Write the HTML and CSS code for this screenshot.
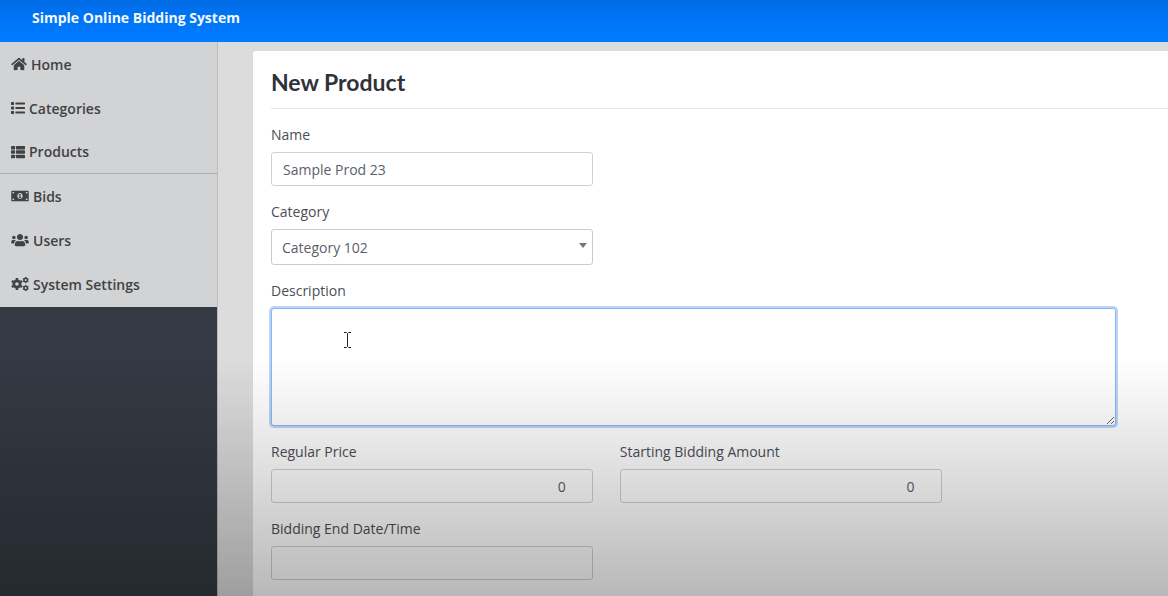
FILE: index.html
```html
<!DOCTYPE html>
<html lang="en">
<head>
<meta charset="utf-8">
<meta name="viewport" content="width=device-width, initial-scale=1">
<title>Simple Online Bidding System</title>
<link rel="stylesheet" href="styles.css">
</head>
<body>
<header class="topbar"><a class="brand" href="#">Simple Online Bidding System</a></header>
<div class="layout">
  <nav class="sidebar">
    <div class="menu">
      <a class="item" href="#"><svg class="icon" width="16" height="14" viewBox="0 0 576 512"><path d="M280.37 148.26L96 300.11V464a16 16 0 0 0 16 16l112.06-.29a16 16 0 0 0 15.92-16V368a16 16 0 0 1 16-16h64a16 16 0 0 1 16 16v95.64a16 16 0 0 0 16 16.05L464 480a16 16 0 0 0 16-16V300L295.67 148.26a12.19 12.19 0 0 0-15.3 0zM571.6 251.47L488 182.56V44.05a12 12 0 0 0-12-12h-56a12 12 0 0 0-12 12v72.61L318.47 43a48 48 0 0 0-61 0L4.34 251.47a12 12 0 0 0-1.6 16.9l25.5 31A12 12 0 0 0 45.15 301l235.22-193.74a12.19 12.19 0 0 1 15.3 0L530.9 301a12 12 0 0 0 16.9-1.6l25.5-31a12 12 0 0 0-1.7-16.93z"/></svg>Home</a>
      <a class="item" href="#"><svg class="icon" width="14" height="14" viewBox="0 0 512 512"><path d="M16 40h80a16 16 0 0 1 16 16v72a16 16 0 0 1-16 16H16a16 16 0 0 1-16-16V56a16 16 0 0 1 16-16zM16 204h80a16 16 0 0 1 16 16v72a16 16 0 0 1-16 16H16a16 16 0 0 1-16-16v-72a16 16 0 0 1 16-16zM16 368h80a16 16 0 0 1 16 16v72a16 16 0 0 1-16 16H16a16 16 0 0 1-16-16v-72a16 16 0 0 1 16-16zM176 58h320a16 16 0 0 1 16 16v40a16 16 0 0 1-16 16H176a16 16 0 0 1-16-16V74a16 16 0 0 1 16-16zM176 220h320a16 16 0 0 1 16 16v40a16 16 0 0 1-16 16H176a16 16 0 0 1-16-16v-40a16 16 0 0 1 16-16zM176 384h320a16 16 0 0 1 16 16v40a16 16 0 0 1-16 16H176a16 16 0 0 1-16-16v-40a16 16 0 0 1 16-16z"/></svg>Categories</a>
      <a class="item item--ruled" href="#"><svg class="icon" width="14" height="14" viewBox="0 0 512 512"><rect x="0" y="32" width="149" height="128" rx="24"/><rect x="0" y="192" width="149" height="128" rx="24"/><rect x="0" y="352" width="149" height="128" rx="24"/><rect x="181" y="32" width="331" height="128" rx="24"/><rect x="181" y="192" width="331" height="128" rx="24"/><rect x="181" y="352" width="331" height="128" rx="24"/></svg>Products</a>
      <a class="item" href="#"><svg class="icon" width="18" height="14" viewBox="0 0 640 512"><path fill-rule="evenodd" d="M32 64h576a32 32 0 0 1 32 32v320a32 32 0 0 1-32 32H32a32 32 0 0 1-32-32V96a32 32 0 0 1 32-32zM48 112v64a64 64 0 0 0 64-64zM48 400h64a64 64 0 0 0-64-64zM320 144c-53 0-96 50-96 112s43 112 96 112 96-50 96-112-43-112-96-112zM592 112h-64a64 64 0 0 0 64 64zM592 336a64 64 0 0 0-64 64h64zM300 184h40v120h24v32h-88v-32h24v-76h-24v-28z"/></svg>Bids</a>
      <a class="item" href="#"><svg class="icon" width="18" height="14" viewBox="0 0 640 512"><path d="M96 224c35.3 0 64-28.7 64-64s-28.7-64-64-64-64 28.7-64 64 28.7 64 64 64zm448 0c35.3 0 64-28.7 64-64s-28.7-64-64-64-64 28.7-64 64 28.7 64 64 64zm32 32h-64c-17.6 0-33.5 7.1-45.1 18.6 40.3 22.1 68.9 62 75.1 109.4h66c17.7 0 32-14.3 32-32v-32c0-35.3-28.7-64-64-64zm-256 0c61.9 0 112-50.1 112-112S381.9 32 320 32 208 82.1 208 144s50.1 112 112 112zm76.8 32h-8.3c-20.8 10-43.9 16-68.5 16s-47.6-6-68.5-16h-8.3C179.6 288 128 339.6 128 403.2V432c0 26.5 21.5 48 48 48h288c26.5 0 48-21.5 48-48v-28.8c0-63.6-51.6-115.2-115.2-115.2zm-223.7-13.4C161.5 263.1 145.6 256 128 256H64c-35.3 0-64 28.7-64 64v32c0 17.7 14.3 32 32 32h65.9c6.3-47.4 34.9-87.3 75.2-109.4z"/></svg>Users</a>
      <a class="item" href="#"><svg class="icon" width="18" height="14" viewBox="0 0 640 512"><g fill="none" stroke="currentColor"><circle cx="208" cy="256" r="116" stroke-width="100"/><path stroke-width="90" d="M208 40v70M208 402v70M21 148l60 35M335 329l60 35M21 364l60-35M335 183l60-35"/><circle cx="528" cy="112" r="64" stroke-width="56"/><circle cx="528" cy="400" r="64" stroke-width="56"/><path stroke-width="52" d="M528 0v36M528 188v36M431 56l31 18M594 150l31 18M431 168l31-18M594 74l31-18M528 288v36M528 476v36M431 344l31 18M594 438l31 18M431 456l31-18M594 362l31-18"/></g></svg>System Settings</a>
    </div>
  </nav>
  <main class="main">
    <section class="card">
      <h1 class="title">New Product</h1>
      <form class="form">
        <div class="field field--start"><label class="label" for="name">Name</label><input class="control" id="name" type="text" value="Sample Prod 23"></div>
        <div class="field field--start"><label class="label" for="category">Category</label>
          <div class="select-wrap"><select class="control control--select" id="category"><option>Category 102</option></select><svg class="arrow" width="8" height="5" viewBox="0 0 8 5"><path d="M0 0h8L4 5z"/></svg></div>
        </div>
        <div class="field field--wide"><label class="label" for="description">Description</label>
          <div class="area-wrap"><textarea class="control control--area" id="description"></textarea>
            <svg class="pointer" width="9" height="18" viewBox="0 0 9 18"><path d="M1 1.5h2.500l1 1 1-1H8M4.500 2.500v13M1 16.500h2.500l1-1 1 1H8"/></svg></div>
        </div>
        <div class="field field--start"><label class="label" for="price">Regular Price</label><input class="control control--number" id="price" type="number" value="0"></div>
        <div class="field"><label class="label" for="bid">Starting Bidding Amount</label><input class="control control--number" id="bid" type="number" value="0"></div>
        <div class="field field--start"><label class="label" for="end">Bidding End Date/Time</label><input class="control" id="end" type="text"></div>
      </form>
    </section>
  </main>
</div>
<div class="shade"></div>
</body>
</html>
```

FILE: styles.css
```css
* { box-sizing: border-box; }

body {
  margin: 0;
  min-height: 100vh;
  display: flex;
  flex-direction: column;
  background: #dcdcdc;
  color: #4b4f54;
  font: 14px/21px "Open Sans", "Noto Sans", sans-serif;
}

.topbar {
  padding: 7px 32px 14px;
  background: linear-gradient(#006ce6, #0077fb 60%, #007bff);
}

.brand {
  color: #f4f8ff;
  font-weight: 700;
  text-decoration: none;
}

.layout {
  flex: 1;
  display: flex;
}

.sidebar {
  flex: none;
  width: 218px;
  background: #343a43;
  border-right: 1px solid #bbb;
}

.menu {
  padding-bottom: 1px;
  background: #d1d3d4;
}

.item {
  display: flex;
  align-items: center;
  gap: 4px;
  height: 44px;
  padding: 0 11px;
  color: #414245;
  font-weight: 600;
  text-decoration: none;
}

.item--ruled { border-bottom: 1px solid #aaacae; }

.icon {
  flex: none;
  fill: currentColor;
}

.main {
  flex: 1;
  display: flex;
  min-width: 0;
  padding: 9px 0 0 35px;
}

.card {
  flex: 1;
  min-width: 0;
  padding: 18px 0 16px 18px;
  background: #fff;
  border-radius: 3px 0 0 0;
}

.title {
  margin: 0 0 15px;
  padding-bottom: 13px;
  border-bottom: 1px solid #e6e7e8;
  color: #2f3238;
  font: 700 23px/26px Lato, "Open Sans", sans-serif;
}

.form {
  display: grid;
  grid-template-columns: repeat(5, 1fr);
  gap: 15px 27px;
  padding-right: 52px;
}

.field {
  grid-column: span 2;
  display: flex;
  flex-direction: column;
  gap: 7px;
  min-width: 0;
}

.field--start { grid-column: 1 / span 2; }
.field--wide { grid-column: 1 / -1; }

.control {
  display: block;
  width: 100%;
  height: 34px;
  padding: 0 11px;
  border: 1px solid #cdd2d8;
  border-radius: 3px;
  background: #fff;
  color: #5a6068;
  font: inherit;
}

.control--number { text-align: right; }

.select-wrap,
.area-wrap { position: relative; }

.control--select {
  height: 36px;
  appearance: none;
  padding: 0 10px;
  border-color: #ccc;
}

.arrow {
  position: absolute;
  top: 14px;
  right: 6px;
  fill: #777;
  pointer-events: none;
}

.control--area {
  height: 118px;
  resize: vertical;
  border-color: #86b7f4;
  outline: none;
  box-shadow: 0 0 0 2px #bbd6f8;
}

.pointer {
  position: absolute;
  top: 23px;
  left: 72px;
  fill: none;
  stroke: #222;
  pointer-events: none;
}

.shade {
  position: fixed;
  inset: auto 0 0;
  height: 40vh;
  background: linear-gradient(rgba(0, 0, 0, 0), rgba(0, 0, 0, 0.05) 20%, rgba(0, 0, 0, 0.15) 55%, rgba(0, 0, 0, 0.28));
  pointer-events: none;
}
```
